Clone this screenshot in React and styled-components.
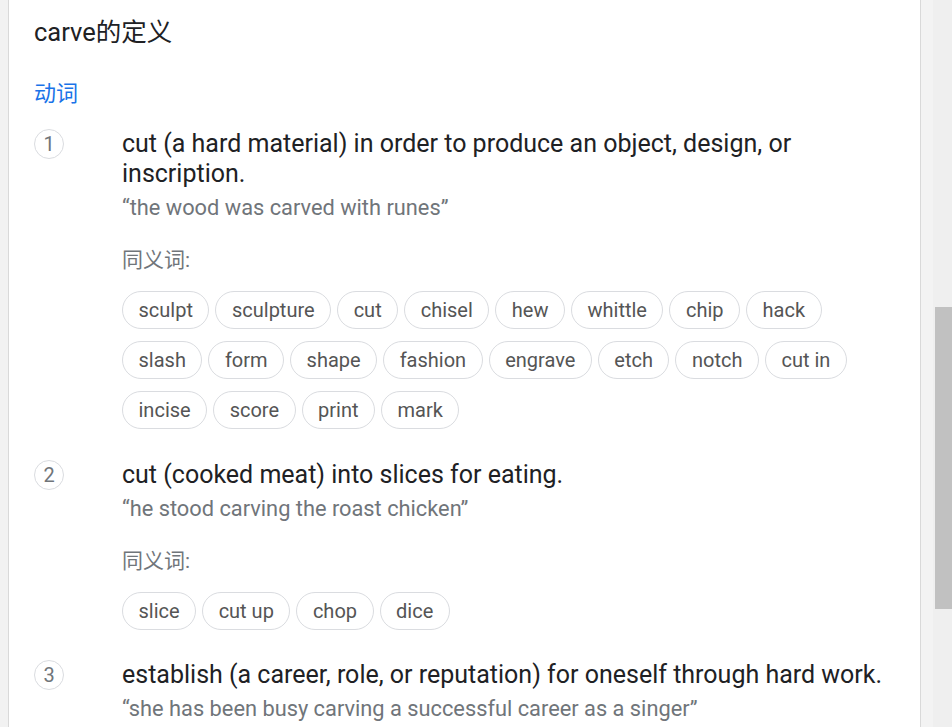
import React from 'react'
import styled, { createGlobalStyle } from 'styled-components'

const GlobalStyle = createGlobalStyle`
  html, body { margin: 0; padding: 0; }
  body {
    font-family: Roboto, "Noto Sans CJK SC", sans-serif;
    background: #fff;
    overflow: hidden;
  }
`

const Page = styled.div`
  display: flex;
  height: 727px;
  overflow: hidden;
`

const LeftGutter = styled.div`
  width: 8px;
  flex: none;
  background: #f2f2f2;
  border-right: 1px solid #d9d9d9;
`

const Card = styled.div`
  flex: 1;
  background: #fff;
  padding: 16px 0 0 25px;
  overflow: hidden;
`

const RightGutter = styled.div`
  width: 31px;
  flex: none;
  display: flex;
  background: #f3f3f3;
  border-left: 1px solid #d9d9d9;
`

const Track = styled.div`
  margin-left: 12px;
  flex: 1;
  background: #efefef;
  padding-top: 307px;
`

const Thumb = styled.div`
  margin-left: 2px;
  height: 302px;
  background: #c1c1c1;
`

const Title = styled.div`
  font-size: 25.5px;
  line-height: 32px;
  color: #202124;
`

const Pos = styled.div`
  margin-top: 32px;
  font-size: 22px;
  line-height: 28px;
  color: #1a73e8;
`

const Sense = styled.div`
  display: grid;
  grid-template-columns: 88px 1fr;
  margin-top: ${({ $gap }) => $gap}px;
`

const Num = styled.div`
  width: 30px;
  height: 30px;
  box-sizing: border-box;
  border: 1px solid #dadce0;
  border-radius: 50%;
  display: flex;
  align-items: center;
  justify-content: center;
  font-size: 20px;
  color: #70757a;
`

const Body = styled.div`
  padding-right: 30px;
`

const Def = styled.div`
  font-size: 25px;
  line-height: 30px;
  color: #202124;
`

const Example = styled.div`
  margin-top: 4px;
  font-size: 21.8px;
  line-height: 30px;
  color: #70757a;
`

const SynLabel = styled.div`
  margin-top: 23px;
  font-size: 21px;
  line-height: 28px;
  color: #70757a;
`

const Chips = styled.div`
  display: flex;
  flex-wrap: wrap;
  gap: 12px 6px;
  margin-top: 17px;
`

const Chip = styled.span`
  height: 38px;
  box-sizing: border-box;
  display: inline-flex;
  align-items: center;
  padding: 0 15.5px;
  border: 1px solid #dadce0;
  border-radius: 19px;
  font-size: 20px;
  color: #555;
`

const senses = [
  {
    def: 'cut (a hard material) in order to produce an object, design, or inscription.',
    example: '“the wood was carved with runes”',
    syns: ['sculpt', 'sculpture', 'cut', 'chisel', 'hew', 'whittle', 'chip', 'hack', 'slash', 'form', 'shape', 'fashion', 'engrave', 'etch', 'notch', 'cut in', 'incise', 'score', 'print', 'mark'],
    gap: 21,
  },
  {
    def: 'cut (cooked meat) into slices for eating.',
    example: '“he stood carving the roast chicken”',
    syns: ['slice', 'cut up', 'chop', 'dice'],
    gap: 31,
  },
  {
    def: 'establish (a career, role, or reputation) for oneself through hard work.',
    example: '“she has been busy carving a successful career as a singer”',
    syns: [],
    gap: 30,
  },
]

const App = () => {
  return (
    <Page>
      <GlobalStyle />
      <LeftGutter />
      <Card>
        <Title>carve的定义</Title>
        <Pos>动词</Pos>
        {senses.map((s, i) => (
          <Sense key={i} $gap={s.gap}>
            <Num>{i + 1}</Num>
            <Body>
              <Def>{s.def}</Def>
              <Example>{s.example}</Example>
              {s.syns.length > 0 && (
                <>
                  <SynLabel>同义词:</SynLabel>
                  <Chips>
                    {s.syns.map((w) => <Chip key={w}>{w}</Chip>)}
                  </Chips>
                </>
              )}
            </Body>
          </Sense>
        ))}
      </Card>
      <RightGutter>
        <Track>
          <Thumb />
        </Track>
      </RightGutter>
    </Page>
  )
}

export default App
